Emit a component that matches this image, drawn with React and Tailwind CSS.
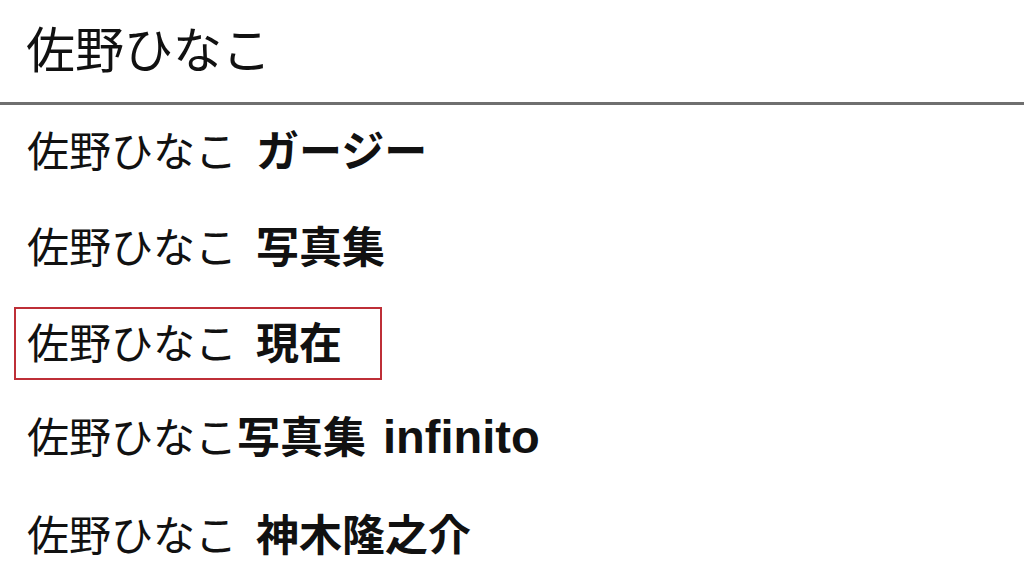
export default function App() {
  const rows = [
    { a: "佐野ひなこ", b: "ガージー", gap: true },
    { a: "佐野ひなこ", b: "写真集", gap: true },
    { a: "佐野ひなこ", b: "現在", gap: true, boxed: true },
    { a: "佐野ひなこ", b: "写真集", latin: "infinito" },
    { a: "佐野ひなこ", b: "神木隆之介", gap: true },
  ];
  return (
    <div className="w-[1024px] h-[579px] bg-white overflow-hidden text-[#111] font-['Noto_Sans_CJK_JP','Noto_Sans',sans-serif]">
      <div className="h-[102px] flex items-center pl-[26px] pb-[9px] text-[49px] leading-none">
        <span>佐野ひなこ</span>
      </div>
      <div className="h-[3px] bg-[#6f6f6f]" />
      <div className="flex flex-col">
        {rows.map((r, i) => (
          <div key={i} className="relative h-[96px] flex items-center pl-[27px] pb-[10px] text-[42px] leading-none">
            <span className="whitespace-pre flex items-baseline">
              <span>{r.a}</span>
              <span className={r.gap ? "font-bold text-[43px] ml-[19px]" : "font-bold text-[43px]"}>{r.b}</span>
              {r.latin && (
                <span className="font-bold text-[47px] ml-[17px] font-['Liberation_Sans','Noto_Sans',sans-serif]">{r.latin}</span>
              )}
            </span>
            {r.boxed && (
              <div className="absolute left-[14px] top-[10px] w-[368px] h-[73px] border-2 border-[#be2f37]" />
            )}
          </div>
        ))}
      </div>
    </div>
  );
}
